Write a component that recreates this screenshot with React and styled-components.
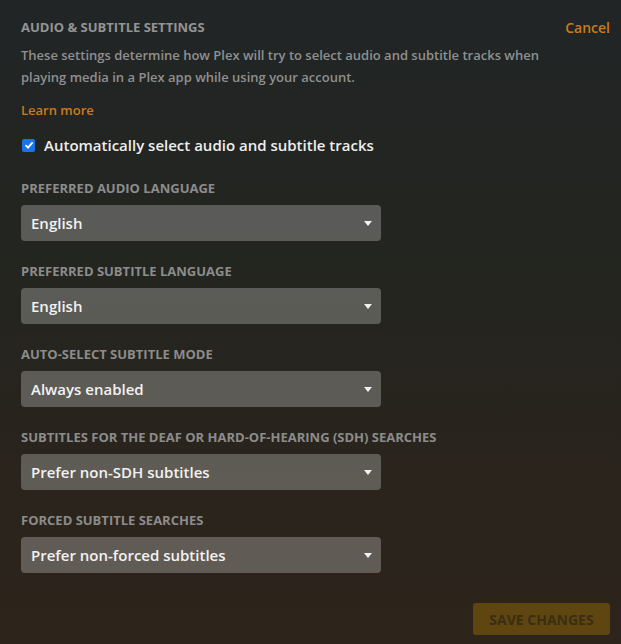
import React from 'react'
import styled, { createGlobalStyle } from 'styled-components'

const GlobalStyle = createGlobalStyle`
  html, body {
    margin: 0;
    padding: 0;
    height: 100%;
  }
  body {
    background: linear-gradient(180deg, #212526 0%, #24251f 45%, #2b241c 80%, #2d241b 100%);
    font-family: "Open Sans", "Liberation Sans", sans-serif;
    color: #eee;
  }
`

const Page = styled.div`
  width: 621px;
  height: 644px;
  box-sizing: border-box;
  padding: 17px 11px 0 21px;
  display: flex;
  flex-direction: column;
`

const Header = styled.div`
  display: flex;
  justify-content: space-between;
  align-items: center;
`

const Title = styled.h2`
  margin: 0;
  font-size: 13px;
  font-weight: 700;
  color: #949494;
  text-transform: uppercase;
  line-height: 20px;
`

const Link = styled.a`
  color: #cc7b19;
  font-size: 14px;
  font-weight: 600;
  text-decoration: none;
  cursor: pointer;
`

const Description = styled.p`
  margin: 7px 0 0;
  width: 560px;
  font-size: 13px;
  font-weight: 600;
  line-height: 22px;
  color: #8f9090;
`

const LearnMore = styled(Link)`
  font-size: 13px;
  margin-top: 12px;
  line-height: 20px;
`

const CheckRow = styled.label`
  display: flex;
  align-items: center;
  gap: 9px;
  margin-top: 14px;
  font-size: 15px;
  font-weight: 600;
  color: #eeeeee;
  line-height: 22px;
`

const Check = styled.span`
  width: 13px;
  height: 13px;
  margin-left: 1px;
  border-radius: 2px;
  background: #1a73e8;
  display: flex;
  align-items: center;
  justify-content: center;
`

const Field = styled.div`
  display: flex;
  flex-direction: column;
  margin-top: ${p => p.$first ? '23px' : '21px'};
`

const Label = styled.div`
  font-size: 13px;
  font-weight: 700;
  text-transform: uppercase;
  color: #8c8c8c;
  line-height: 18px;
  margin-bottom: 8px;
`

const Select = styled.div`
  width: 360px;
  height: 36px;
  box-sizing: border-box;
  padding: 0 9px 0 10px;
  border-radius: 4px;
  background: rgba(255, 255, 255, 0.25);
  display: flex;
  align-items: center;
  justify-content: space-between;
  font-size: 15px;
  font-weight: 600;
  color: #f2f2f2;
`

const Arrow = styled.span`
  width: 0;
  height: 0;
  border-left: 4px solid transparent;
  border-right: 4px solid transparent;
  border-top: 5px solid #f2f2f2;
`

const Footer = styled.div`
  margin-top: 30px;
  display: flex;
  justify-content: flex-end;
`

const SaveButton = styled.button`
  width: 137px;
  height: 32px;
  border: none;
  border-radius: 3px;
  background: #5f4611;
  color: #3a2e12;
  font-family: "Open Sans", "Liberation Sans", sans-serif;
  font-size: 14px;
  font-weight: 700;
  text-transform: uppercase;
  cursor: not-allowed;
`

const fields = [
  { label: 'Preferred audio language', value: 'English' },
  { label: 'Preferred subtitle language', value: 'English' },
  { label: 'Auto-select subtitle mode', value: 'Always enabled' },
  { label: 'Subtitles for the deaf or hard-of-hearing (SDH) searches', value: 'Prefer non-SDH subtitles' },
  { label: 'Forced subtitle searches', value: 'Prefer non-forced subtitles' },
]

function App() {
  return (
    <Page>
      <GlobalStyle />
      <Header>
        <Title>Audio &amp; Subtitle Settings</Title>
        <Link>Cancel</Link>
      </Header>
      <Description>
        These settings determine how Plex will try to select audio and subtitle tracks when
        playing media in a Plex app while using your account.
      </Description>
      <LearnMore>Learn more</LearnMore>
      <CheckRow>
        <Check>
          <svg width="10" height="10" viewBox="0 0 10 10">
            <path d="M1.5 5.2 L4 7.6 L8.6 2.4" fill="none" stroke="#fff" strokeWidth="1.8" />
          </svg>
        </Check>
        Automatically select audio and subtitle tracks
      </CheckRow>
      {fields.map((f, i) => (
        <Field key={f.label} $first={i === 0}>
          <Label>{f.label}</Label>
          <Select>
            {f.value}
            <Arrow />
          </Select>
        </Field>
      ))}
      <Footer>
        <SaveButton disabled>Save Changes</SaveButton>
      </Footer>
    </Page>
  )
}

export default App
